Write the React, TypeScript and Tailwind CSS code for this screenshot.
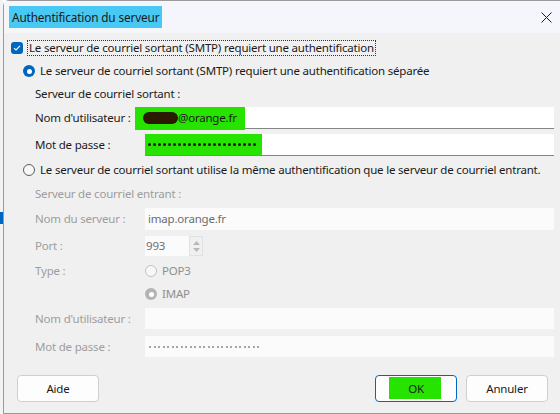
import React from "react";

const font = { fontFamily: '"Segoe UI", "Noto Sans", "Open Sans", sans-serif' };

function Radio({ checked, disabled }: { checked?: boolean; disabled?: boolean }) {
  if (checked && !disabled)
    return (
      <span className="flex h-[12px] w-[12px] shrink-0 items-center justify-center rounded-full bg-[#0067c0]">
        <span className="h-[5px] w-[5px] rounded-full bg-white" />
      </span>
    );
  if (checked && disabled)
    return (
      <span className="flex h-[12px] w-[12px] shrink-0 items-center justify-center rounded-full bg-[#b4b4b4]">
        <span className="h-[5px] w-[5px] rounded-full bg-white" />
      </span>
    );
  return (
    <span
      className={
        "h-[12px] w-[12px] shrink-0 rounded-full border bg-[#f7f7f7] " +
        (disabled ? "border-[#c2c2c2]" : "border-[#5c5c5c]")
      }
    />
  );
}

function Label({ children, disabled }: { children: React.ReactNode; disabled?: boolean }) {
  return (
    <div className={"w-[110px] shrink-0 whitespace-nowrap " + (disabled ? "text-[#9d9d9d]" : "text-[#1a1a1a]")}>
      {children}
    </div>
  );
}

function Dots({ n, big }: { n: number; big?: boolean }) {
  return (
    <div className={"relative flex items-center " + (big ? "gap-[2px]" : "gap-[2.5px]")}>
      {Array.from({ length: n }).map((_, i) => (
        <span
          key={i}
          className={big ? "h-[3px] w-[3px] rounded-full bg-[#1a1a1a]" : "h-[2px] w-[2px] rounded-full bg-[#8a8a8a]"}
        />
      ))}
    </div>
  );
}

export default function App() {
  return (
    <div
      className="flex h-[414px] w-[560px] overflow-hidden bg-white text-[11.5px] leading-[16px] tracking-[-0.2px]"
      style={font}
    >
      {/* strip of window behind */}
      <div className="flex w-[3px] shrink-0 flex-col bg-[#f3f3f3]">
        <div className="mt-[212px] h-[12px] w-[3px] bg-[#0067c0]" />
      </div>
      <div className="flex min-w-0 flex-1 flex-col rounded-tl-[6px] border-b border-l border-t border-[#9a9a9a] bg-[#f0f0f0]">
        {/* title bar */}
        <div className="flex h-[32px] shrink-0 items-center justify-between bg-[#f4f6fb] pl-[5px] pr-[7px]">
          <span className="bg-[#48c9f3] px-[3px] py-[3px] text-[11.8px] leading-[16px] tracking-[-0.15px] text-[#1a1a1a]">
            Authentification du serveur
          </span>
          <svg width="11" height="11" viewBox="0 0 11 11" className="mr-[1px]">
            <path d="M0.5 0.5 L10.5 10.5 M10.5 0.5 L0.5 10.5" stroke="#1a1a1a" strokeWidth="1" />
          </svg>
        </div>

        <div className="flex flex-col pl-[7px] pr-[6px] text-[#1a1a1a]">
          {/* checkbox */}
          <div className="mt-[7px] flex h-[16px] items-center">
            <span className="flex h-[12px] w-[12px] shrink-0 items-center justify-center rounded-[3px] bg-[#0067c0]">
              <svg width="8" height="8" viewBox="0 0 8 8">
                <path d="M1 4.2 L3 6 L7 1.8" stroke="white" strokeWidth="1.1" fill="none" />
              </svg>
            </span>
            <span className="ml-[4px] border border-dotted border-[#333] px-[1px] leading-[14px]">
              Le serveur de courriel sortant (SMTP) requiert une authentification
            </span>
          </div>

          {/* radio 1 */}
          <div className="mt-[7px] flex h-[16px] items-center pl-[12px]">
            <Radio checked />
            <span className="ml-[5px]">Le serveur de courriel sortant (SMTP) requiert une authentification séparée</span>
          </div>

          <div className="mt-[7px] h-[16px] pl-[24px]">Serveur de courriel sortant :</div>

          <div className="mt-[5px] flex h-[22px] items-center pl-[24px]">
            <Label>Nom d'utilisateur :</Label>
            <div className="relative flex h-[22px] flex-1 items-center border-b border-[#858585] bg-white">
              <div className="absolute left-[-10px] top-[0px] h-[23px] w-[110px] bg-[#26e300]" />
              <span className="relative ml-[-2px] h-[12px] w-[35px] rounded-full bg-[#2b1900]" />
              <span className="relative">@orange.fr</span>
            </div>
          </div>

          <div className="mt-[5px] flex h-[22px] items-center pl-[24px]">
            <Label>Mot de passe :</Label>
            <div className="relative flex h-[22px] flex-1 items-center border-b border-[#858585] bg-white pl-[3px]">
              <div className="absolute left-[0px] top-[0px] h-[21px] w-[117px] bg-[#26e300]" />
              <Dots n={22} big />
            </div>
          </div>

          {/* radio 2 */}
          <div className="mt-[6px] flex h-[16px] items-center pl-[12px]">
            <Radio />
            <span className="ml-[5px] whitespace-nowrap">
              Le serveur de courriel sortant utilise la même authentification que le serveur de courriel entrant.
            </span>
          </div>

          <div className="mt-[8px] h-[16px] pl-[24px] text-[#9d9d9d]">Serveur de courriel entrant :</div>

          <div className="mt-[6px] flex h-[22px] items-center pl-[24px]">
            <Label disabled>Nom du serveur :</Label>
            <div className="flex h-[22px] flex-1 items-center bg-[#fbfbfb] pl-[3px] text-[#6e6e6e]">imap.orange.fr</div>
          </div>

          <div className="mt-[6px] flex h-[20px] items-center pl-[24px]">
            <Label disabled>Port :</Label>
            <div className="flex h-[20px] w-[44px] items-center bg-[#fbfbfb] pl-[1px] text-[#6e6e6e]">993</div>
            <div className="flex h-[20px] w-[14px] flex-col items-center justify-center gap-[3px] border border-[#e2e2e2] bg-[#f0f0f0]">
              <svg width="7" height="4" viewBox="0 0 7 4">
                <path d="M0 4 L3.5 0 L7 4 Z" fill="#b9b9b9" />
              </svg>
              <svg width="7" height="4" viewBox="0 0 7 4">
                <path d="M0 0 L3.5 4 L7 0 Z" fill="#b9b9b9" />
              </svg>
            </div>
          </div>

          <div className="mt-[7px] flex h-[16px] items-center pl-[24px]">
            <Label disabled>Type :</Label>
            <Radio disabled />
            <span className="ml-[5px] text-[#8f8f8f]">POP3</span>
          </div>

          <div className="mt-[7px] flex h-[16px] items-center pl-[24px]">
            <div className="w-[110px] shrink-0" />
            <Radio checked disabled />
            <span className="ml-[5px] text-[#8f8f8f]">IMAP</span>
          </div>

          <div className="mt-[6px] flex h-[21px] items-center pl-[24px]">
            <Label disabled>Nom d'utilisateur :</Label>
            <div className="h-[21px] flex-1 bg-[#fbfbfb]" />
          </div>

          <div className="mt-[7px] flex h-[21px] items-center pl-[24px]">
            <Label disabled>Mot de passe :</Label>
            <div className="flex h-[21px] flex-1 items-center bg-[#fbfbfb] pl-[4px]">
              <Dots n={25} />
            </div>
          </div>

          {/* buttons */}
          <div className="mt-[18px] flex h-[27px] items-center pl-[6px] pr-[6px]">
            <button className="h-[27px] w-[82px] rounded-[4px] border border-[#cfcfcf] bg-[#fdfdfd] text-[#1a1a1a]">
              Aide
            </button>
            <div className="flex-1" />
            <button className="relative flex h-[27px] w-[82px] items-center justify-center rounded-[4px] border border-[#0067c0] bg-[#fdfdfd] text-[#1a1a1a]">
              <span className="absolute left-[13px] top-[1px] h-[22px] w-[52px] bg-[#26e300]" />
              <span className="relative">OK</span>
            </button>
            <button className="ml-[9px] h-[27px] w-[82px] rounded-[4px] border border-[#cfcfcf] bg-[#fdfdfd] text-[#1a1a1a]">
              Annuler
            </button>
          </div>
        </div>
      </div>
    </div>
  );
}
